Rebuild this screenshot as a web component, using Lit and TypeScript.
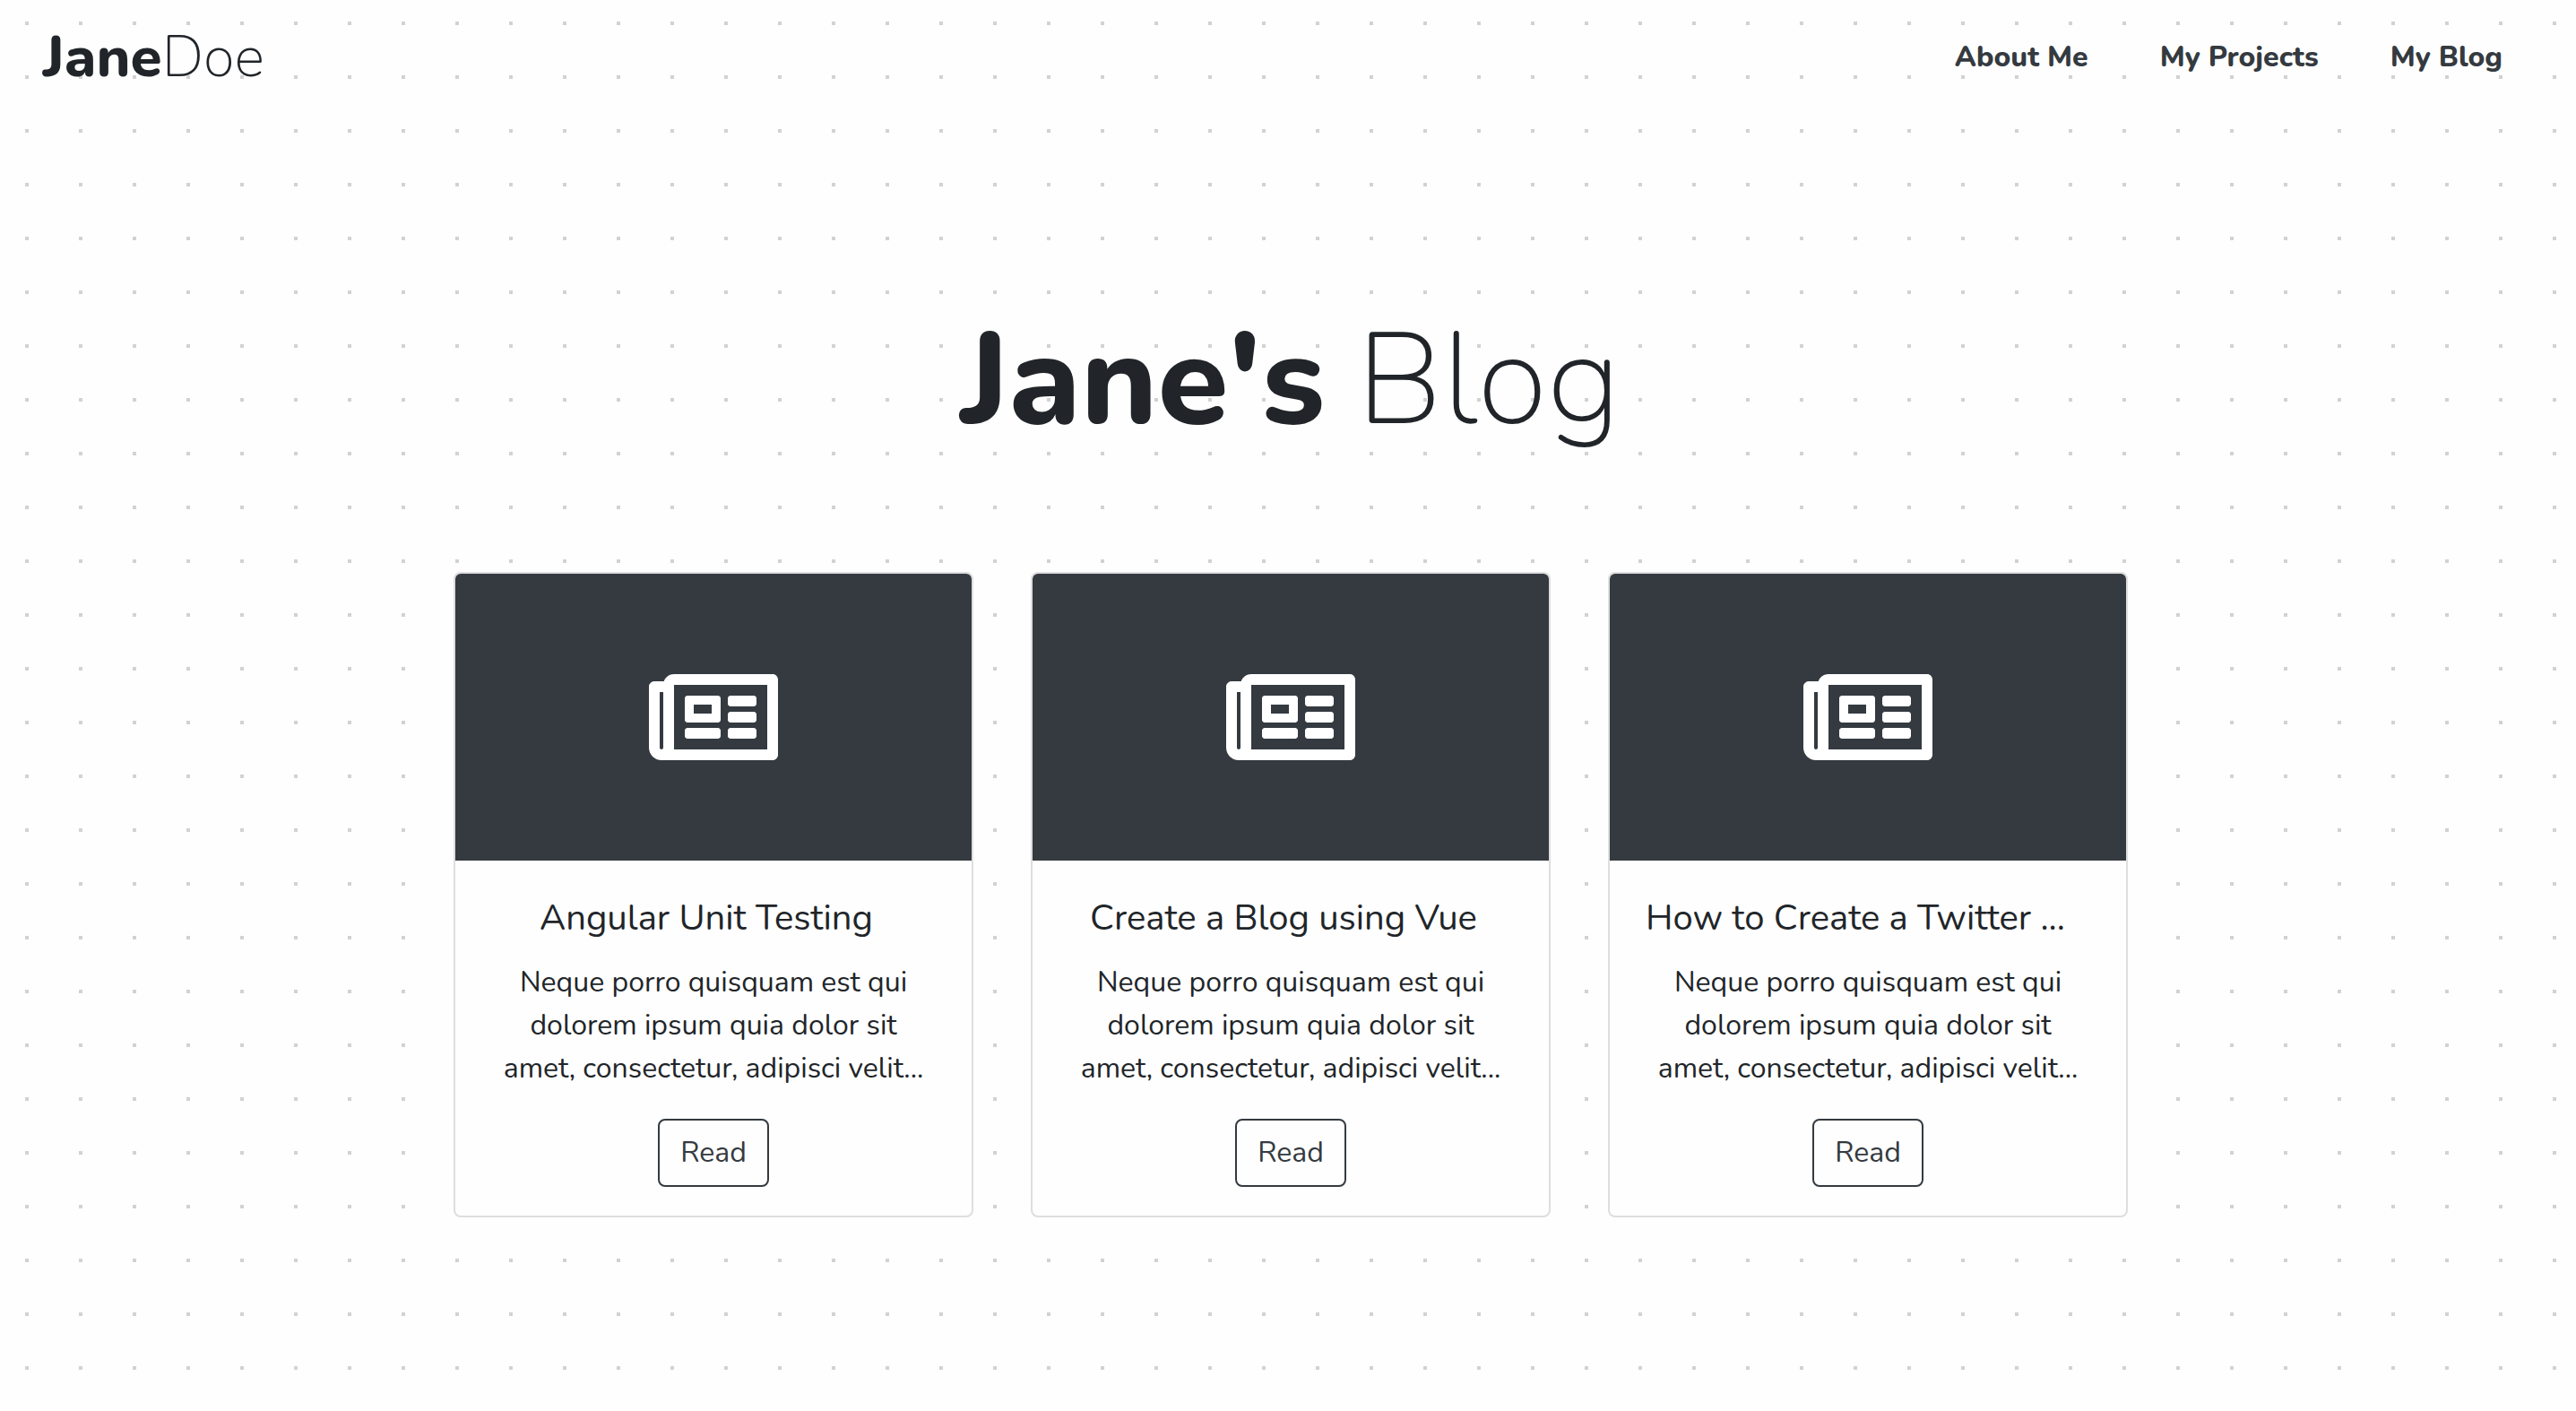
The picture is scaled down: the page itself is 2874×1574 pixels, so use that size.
import { LitElement, html, css } from "lit";
import { customElement, property } from "lit/decorators.js";
import { classMap } from "lit/directives/class-map.js";

interface Post {
  title: string;
  excerpt: string;
}

const EXCERPT =
  "Neque porro quisquam est qui dolorem ipsum quia dolor sit amet, consectetur, adipisci velit...";

const POSTS: Post[] = [
  { title: "Angular Unit Testing", excerpt: EXCERPT },
  { title: "Create a Blog using Vue", excerpt: EXCERPT },
  { title: "How to Create a Twitter ...", excerpt: EXCERPT },
];

const LINKS = ["About Me", "My Projects", "My Blog"];

@customElement("blog-card")
export class BlogCard extends LitElement {
  @property({ attribute: false }) post!: Post;

  static styles = css`
    :host {
      display: block;
    }
    .card {
      box-sizing: border-box;
      height: 100%;
      border: 2px solid rgba(0, 0, 0, 0.125);
      border-radius: 8px;
      background: #fefefe;
      text-align: center;
      overflow: hidden;
    }
    .cover {
      display: flex;
      align-items: center;
      justify-content: center;
      height: 320px;
      background: #343a40;
      color: #fff;
    }
    .icon {
      width: 144px;
      height: 128px;
      fill: currentColor;
    }
    .body {
      padding: 40px 40px 32px;
    }
    .title {
      margin: 0 16px 24px 0;
      font-size: 40px;
      line-height: 48px;
      font-weight: 400;
      white-space: nowrap;
    }
    /* Shortened titles fill the line, so they start at its edge. */
    .shortened {
      text-align: start;
    }
    .excerpt {
      margin: 0 0 32px;
      font-size: 32px;
      line-height: 48px;
    }
    .read {
      box-sizing: border-box;
      display: inline-block;
      vertical-align: top;
      padding: 12px 23px;
      border: 2px solid #343a40;
      border-radius: 8px;
      background: transparent;
      color: #343a40;
      font-family: inherit;
      font-size: 32px;
      line-height: 48px;
      cursor: pointer;
    }
    .read:hover {
      background: #343a40;
      color: #fff;
    }
  `;

  render() {
    const titleClasses = { title: true, shortened: this.post.title.endsWith("...") };
    return html`
      <article class="card">
        <div class="cover">
          <svg class="icon" viewBox="0 0 576 512" aria-hidden="true">
            <path
              d="M552 64H112c-20.858 0-38.643 13.377-45.248 32H24c-13.255 0-24 10.745-24 24v272c0 30.928 25.072 56 56 56h496c13.255 0 24-10.745 24-24V88c0-13.255-10.745-24-24-24zM48 392V144h16v248c0 4.411-3.589 8-8 8s-8-3.589-8-8zm480 8H111.422c.374-2.614.578-5.283.578-8V112h416v288zM172 280h136c6.627 0 12-5.373 12-12v-96c0-6.627-5.373-12-12-12H172c-6.627 0-12 5.373-12 12v96c0 6.627 5.373 12 12 12zm28-80h80v40h-80v-40zm-40 140v-24c0-6.627 5.373-12 12-12h136c6.627 0 12 5.373 12 12v24c0 6.627-5.373 12-12 12H172c-6.627 0-12-5.373-12-12zm192 0v-24c0-6.627 5.373-12 12-12h104c6.627 0 12 5.373 12 12v24c0 6.627-5.373 12-12 12H364c-6.627 0-12-5.373-12-12zm0-144v-24c0-6.627 5.373-12 12-12h104c6.627 0 12 5.373 12 12v24c0 6.627-5.373 12-12 12H364c-6.627 0-12-5.373-12-12zm0 72v-24c0-6.627 5.373-12 12-12h104c6.627 0 12 5.373 12 12v24c0 6.627-5.373 12-12 12H364c-6.627 0-12-5.373-12-12z"
            ></path>
          </svg>
        </div>
        <div class="body">
          <h2 class=${classMap(titleClasses)}>${this.post.title}</h2>
          <p class="excerpt">${this.post.excerpt}</p>
          <button class="read" type="button">Read</button>
        </div>
      </article>
    `;
  }
}

@customElement("app-root")
export class AppRoot extends LitElement {
  static styles = css`
    :host {
      display: block;
      box-sizing: border-box;
      min-height: 100vh;
      background-color: #fefefe;
      background-image: conic-gradient(at 4px 4px, transparent 270deg, #d2d2d2 270deg);
      background-size: 60px 60px;
      background-position: 28px 24px;
      color: #212529;
      font-family: Nunito, "Open Sans", sans-serif;
    }
    .nav {
      display: flex;
      align-items: center;
      justify-content: space-between;
      padding: 16px 82px 16px 48px;
    }
    .brand {
      color: inherit;
      text-decoration: none;
      font-size: 64px;
      line-height: 96px;
      font-weight: 200;
    }
    .strong {
      font-weight: 800;
    }
    .links {
      display: flex;
      gap: 80px;
      margin: 0;
      padding: 0;
      list-style: none;
    }
    .link {
      color: #343a40;
      text-decoration: none;
      font-size: 32px;
      line-height: 48px;
      font-weight: 800;
    }
    .content {
      padding: 0 0 64px 6px;
    }
    .heading {
      margin: 210px 0 126px;
      text-align: center;
      font-size: 144px;
      line-height: 174px;
      font-weight: 200;
    }
    .posts {
      display: flex;
      flex-wrap: wrap;
      justify-content: center;
      gap: 64px;
    }
    .post {
      width: 580px;
    }
  `;

  render() {
    return html`
      <nav class="nav">
        <a class="brand" href="#"><span class="strong">Jane</span>Doe</a>
        <ul class="links">
          ${LINKS.map((label) => html`<li><a class="link" href="#">${label}</a></li>`)}
        </ul>
      </nav>
      <main class="content">
        <h1 class="heading"><span class="strong">Jane's</span> Blog</h1>
        <section class="posts">
          ${POSTS.map((post) => html`<blog-card class="post" .post=${post}></blog-card>`)}
        </section>
      </main>
    `;
  }
}
